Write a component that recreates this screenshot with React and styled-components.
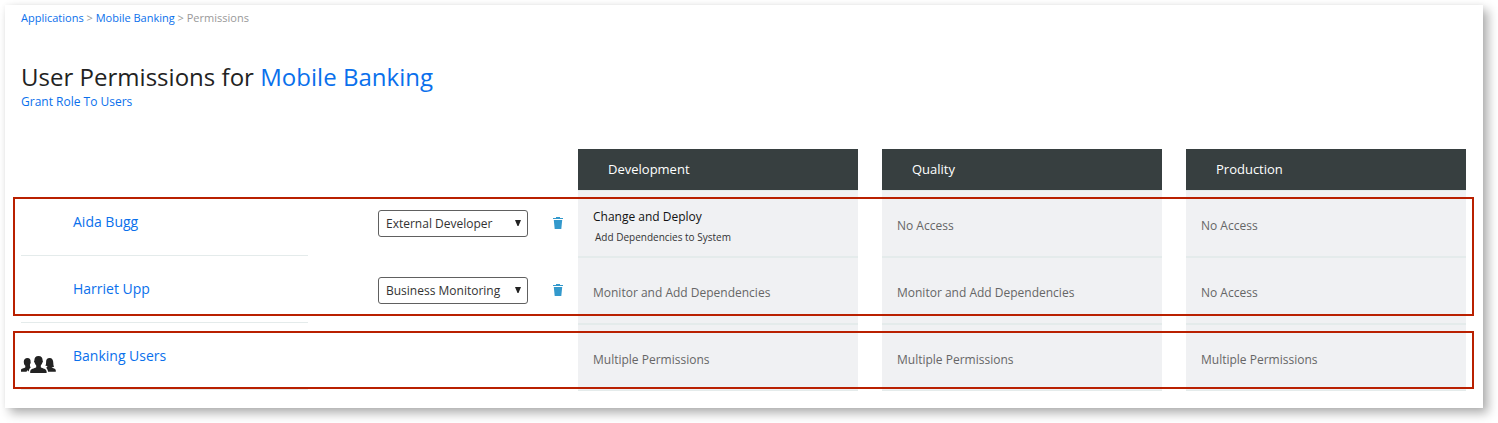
import React from "react";
import styled, { createGlobalStyle } from "styled-components";

const GlobalStyle = createGlobalStyle`
  * { box-sizing: border-box; }
  body {
    margin: 0;
    background: #fff;
    font-family: "Open Sans", "Noto Sans", sans-serif;
    overflow: hidden;
  }
`;

const Page = styled.div`
  padding: 5px 15px 15px 5px;
`;

const Card = styled.main`
  position: relative;
  height: 403px;
  padding: 5px 17px 0 16px;
  background: #fff;
  box-shadow: 5px 5px 10px rgba(0, 0, 0, 0.32), 0 0 5px rgba(0, 0, 0, 0.04);
`;

const Link = styled.a`
  color: #0a70ec;
  text-decoration: none;
`;

const Breadcrumb = styled.nav`
  height: 16px;
  color: #999;
  font-size: 11px;
  line-height: 16px;
  white-space: pre;
`;

const Title = styled.h1`
  margin: 34px 0 0;
  color: #222;
  font-size: 24px;
  font-weight: 400;
  line-height: 34px;
  letter-spacing: 0.02px;
`;

const Actions = styled.div`
  height: 16px;
  font-size: 12px;
  line-height: 16px;
`;

const Row = styled.div`
  display: grid;
  grid-template-columns: 287px 222px repeat(3, 280px);
  column-gap: 24px;
  align-items: start;
`;

const HeaderRow = styled(Row)`
  margin-top: 39px;
`;

const EnvHeader = styled.div`
  height: 42px;
  padding-left: 30px;
  border-bottom: 1px solid #e4ebeb;
  background: #373f40;
  color: #fff;
  font-size: 13px;
  line-height: 41px;
  &:first-child { grid-column: 3; }
`;

const UserCell = styled.div`
  display: grid;
  grid-template-columns: 52px 1fr;
  height: 65px;
  padding-top: 20px;
  border-bottom: 1px solid #e4ebeb;
  font-size: 14px;
  line-height: 22px;
`;

const IconSlot = styled.span`
  padding-top: 11px;
  line-height: 0;
`;

const RoleCell = styled.div`
  display: flex;
  align-items: center;
  gap: 25px;
  padding: 19px 0 0 46px;
`;

const Select = styled.button`
  display: flex;
  flex: none;
  align-items: center;
  justify-content: space-between;
  width: 150px;
  height: 27px;
  padding: 0 6px 0 7px;
  border: 1px solid #606060;
  border-radius: 3px;
  background: #fff;
  color: #333;
  font: 12px/25px "Open Sans", sans-serif;
  white-space: nowrap;
`;

const EnvCell = styled.div`
  height: ${(p) => (p.$last ? 66 : 67)}px;
  padding: ${(p) => (p.$detailed ? 17 : 26)}px 15px 0;
  border-bottom: ${(p) => (p.$last ? 1 : 2)}px solid #e4ebeb;
  background: #f0f1f3;
  color: ${(p) => (p.$detailed ? "#111" : "#666")};
  font-size: 12px;
  line-height: 17px;
`;

const Detail = styled.div`
  margin-top: 5px;
  padding-left: 2px;
  color: #333;
  font-size: 10px;
  line-height: 14px;
`;

const Highlight = styled.div`
  position: absolute;
  left: 8px;
  top: ${(p) => p.$top}px;
  width: 1461px;
  height: ${(p) => p.$height}px;
  border: 2px solid #b92000;
  pointer-events: none;
`;

const Glyph = styled.svg`
  display: block;
  flex: none;
`;

const TrashGlyph = styled(Glyph)`
  margin-bottom: 1px;
`;

const Arrow = () => (
  <Glyph width="6" height="7" viewBox="0 0 6 7">
    <path d="M0 0H6L3.5 6H2.5Z" fill="#222" />
  </Glyph>
);

const Trash = () => (
  <TrashGlyph width="10" height="12" viewBox="0 0 10 12">
    <path d="M0 1H3V0H7V1H10V2H0ZM0.8 3H9.2L8.3 12H1.7Z" fill="#3399cc" />
  </TrashGlyph>
);

const Group = () => (
  <Glyph width="35" height="18" viewBox="0 0 35 18" fill="#222">
    <path d="M17.5 0C20.3 0 21.8 1.9 21.6 4.6C22.3 5 21.9 6.4 21.3 6.8C20.9 8.2 20.1 9 19.8 9.5V11.2C21.4 12.4 25.6 12.6 25.6 15.6V17H9.2V15.6C9.2 12.6 13.6 12.4 15.2 11.2V9.5C14.8 9 14.1 8.2 13.7 6.8C13.1 6.4 12.7 5 13.4 4.6C13.2 1.9 14.7 0 17.5 0Z" />
    <path d="M6.3 2C8.8 2 9.8 3.7 9.6 5.7C10 7 9.4 7.6 9 8.2C8.8 10.2 9.2 10.7 9.7 11.4C8.6 12.2 8 13.4 7.7 15.6L6.3 14.2L5.5 15.7H0V14.2C0 12.4 3.1 12.6 4.3 11.3V9.8C3.2 9.2 2.7 6.9 2.8 5.3C2.9 3.4 4.4 2 6.3 2Z" />
    <path d="M28.6 2C31.3 2 32.3 4 32.3 7C32.3 9.1 32.7 10 33 10.7C32.3 11.3 31.4 11.3 30.6 11.3C31.8 12.6 34.8 12.4 34.8 14.4V15.7H27.1C26.8 13.4 25.8 12.4 25 11.7C26 11.4 26.4 10.8 26.4 10.2C25.3 10.2 24.6 10.1 24.4 9.6C25 9 25.1 7.6 25.1 5.8C25.1 3.5 26.2 2 28.6 2Z" />
  </Glyph>
);

const environments = ["Development", "Quality", "Production"];

const members = [
  {
    name: "Aida Bugg",
    role: "External Developer",
    access: [{ text: "Change and Deploy", detail: "Add Dependencies to System" }, { text: "No Access" }, { text: "No Access" }],
  },
  {
    name: "Harriet Upp",
    role: "Business Monitoring",
    access: [{ text: "Monitor and Add Dependencies" }, { text: "Monitor and Add Dependencies" }, { text: "No Access" }],
  },
  {
    name: "Banking Users",
    group: true,
    access: [{ text: "Multiple Permissions" }, { text: "Multiple Permissions" }, { text: "Multiple Permissions" }],
  },
];

export default function App() {
  return (
    <Page>
      <GlobalStyle />
      <Card>
        <Breadcrumb>
          <Link>Applications</Link> &gt; <Link>Mobile Banking</Link> &gt; Permissions
        </Breadcrumb>
        <Title>
          User Permissions for <Link>Mobile Banking</Link>
        </Title>
        <Actions>
          <Link>Grant Role To Users</Link>
        </Actions>
        <HeaderRow>
          {environments.map((env) => (
            <EnvHeader key={env}>{env}</EnvHeader>
          ))}
        </HeaderRow>
        {members.map((m, i) => (
          <Row key={m.name}>
            <UserCell>
              <IconSlot>{m.group && <Group />}</IconSlot>
              <Link>{m.name}</Link>
            </UserCell>
            <RoleCell>
              {m.role && (
                <>
                  <Select>
                    {m.role}
                    <Arrow />
                  </Select>
                  <Trash />
                </>
              )}
            </RoleCell>
            {m.access.map((a, j) => (
              <EnvCell key={j} $detailed={!!a.detail} $last={i === members.length - 1}>
                {a.text}
                {a.detail && <Detail>{a.detail}</Detail>}
              </EnvCell>
            ))}
          </Row>
        ))}
        <Highlight $top={192} $height={119} />
        <Highlight $top={326} $height={58} />
      </Card>
    </Page>
  );
}
